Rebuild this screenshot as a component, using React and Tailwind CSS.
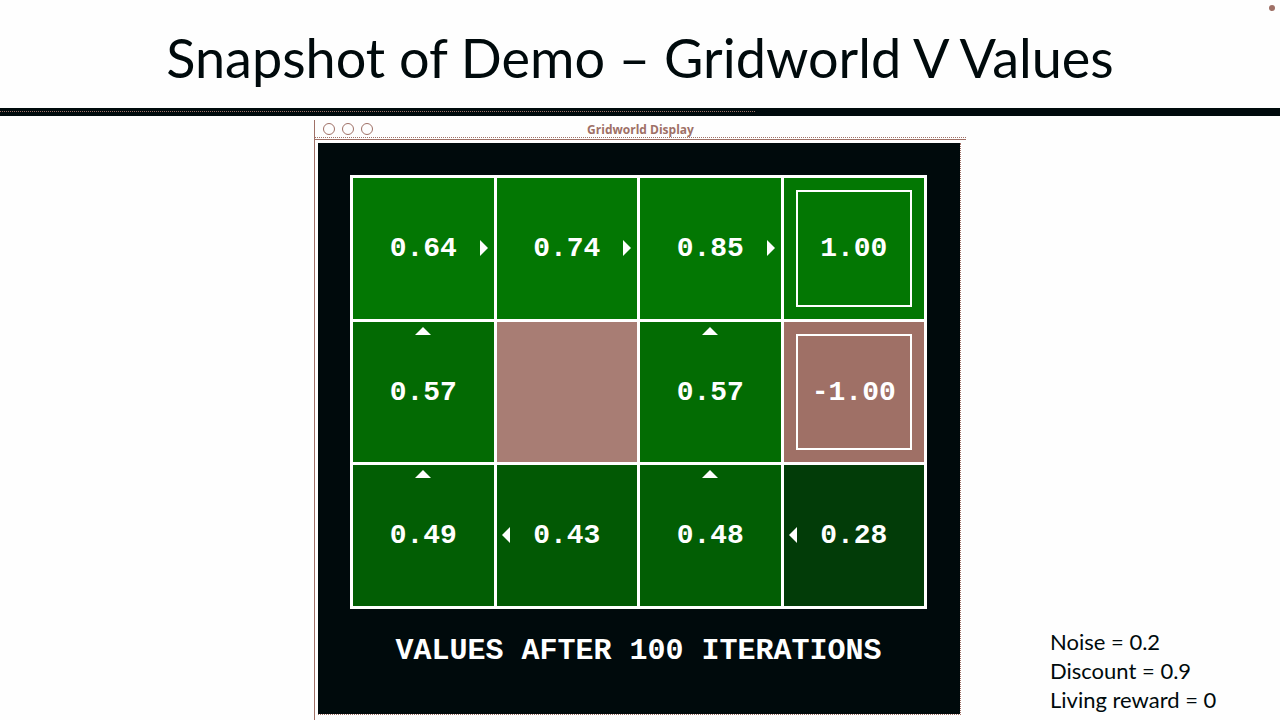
const rows = [
  [
    { value: '0.64', arrow: 'right', tone: 'bg-[#037703]' },
    { value: '0.74', arrow: 'right', tone: 'bg-[#037703]' },
    { value: '0.85', arrow: 'right', tone: 'bg-[#037703]' },
    { value: '1.00', terminal: true, tone: 'bg-[#037703]' },
  ],
  [
    { value: '0.57', arrow: 'up', tone: 'bg-[#036a03]' },
    { value: '', tone: 'bg-[#a87d74]' },
    { value: '0.57', arrow: 'up', tone: 'bg-[#036c03]' },
    { value: '-1.00', terminal: true, tone: 'bg-[#9f7066]' },
  ],
  [
    { value: '0.49', arrow: 'up', tone: 'bg-[#025e04]' },
    { value: '0.43', arrow: 'left', tone: 'bg-[#025904]' },
    { value: '0.48', arrow: 'up', tone: 'bg-[#025e04]' },
    { value: '0.28', arrow: 'left', tone: 'bg-[#023c08]' },
  ],
];

function Arrow({ direction }) {
  if (direction === 'up') {
    return (
      <svg className="absolute top-[5px] left-1/2 h-2 w-4 -translate-x-1/2" viewBox="0 0 16 8" aria-hidden="true">
        <path d="M8 0 16 8H0Z" fill="#fff" />
      </svg>
    );
  }
  if (direction === 'left') {
    return (
      <svg className="absolute top-1/2 left-[5px] h-4 w-2 -translate-y-1/2" viewBox="0 0 8 16" aria-hidden="true">
        <path d="M0 8 8 0V16Z" fill="#fff" />
      </svg>
    );
  }
  return (
    <svg className="absolute top-1/2 right-[6px] h-4 w-2 -translate-y-1/2" viewBox="0 0 8 16" aria-hidden="true">
      <path d="M8 8 0 0V16Z" fill="#fff" />
    </svg>
  );
}

function Cell({ value, arrow, terminal, tone }) {
  return (
    <div className={`relative flex aspect-square p-3 ${tone}`}>
      <div
        className={`flex flex-1 items-center justify-center border-2 pt-0.5 ${terminal ? 'border-white' : 'border-transparent'}`}
      >
        <span>{value}</span>
      </div>
      {arrow && <Arrow direction={arrow} />}
    </div>
  );
}

function TitleBar() {
  return (
    <div className="relative flex h-5 items-center justify-center border-b border-[#9f7066]">
      <svg className="absolute top-[3px] left-2 h-3 w-[51px]" viewBox="0 0 51 12" fill="none" stroke="#9f7066" aria-hidden="true">
        <circle cx="6" cy="6" r="5.5" />
        <circle cx="25" cy="6" r="5.5" />
        <circle cx="44" cy="6" r="5.5" />
      </svg>
      <h2 className="font-['Open_Sans',sans-serif] text-xs leading-4 font-bold text-[#9f7066]">Gridworld Display</h2>
      <div className="absolute inset-x-0 bottom-px border-b border-dotted border-[#9f7066]" />
    </div>
  );
}

export default function App() {
  return (
    <main className="relative flex min-h-screen flex-col bg-[#fefefe] font-['Lato',sans-serif] text-[#000a0c]">
      <div className="absolute top-[5px] right-[5px] h-1.5 w-1.5 rounded-full bg-[#9f7066]" />
      <h1 className="px-6 pt-[26px] pb-[18px] text-center text-[54px] leading-[64px]">Snapshot of Demo – Gridworld V Values</h1>
      <div className="h-2 bg-[#000a0c] pt-[3px]">
        <div className="w-[59%] border-t border-dotted border-[#9f7066]" />
      </div>
      <div className="grid flex-1 grid-cols-[1fr_minmax(0,652px)_1fr]">
        <section className="col-start-2 mt-1 border-l border-[#9f7066]">
          <TitleBar />
          <div className="mt-[3px] mr-[5px] ml-[3px] border-r border-b border-dotted border-[#9f7066] bg-[#000a0c] bg-clip-padding pt-8 pr-[33px] pb-[45px] pl-8 font-['Liberation_Mono',monospace] font-bold text-white">
            <div className="flex flex-col gap-[3px] bg-white p-[3px] text-[28px] leading-8">
              {rows.map((row, index) => (
                <div key={index} className="grid grid-cols-4 gap-[3px]">
                  {row.map((cell, column) => (
                    <Cell key={column} {...cell} />
                  ))}
                </div>
              ))}
            </div>
            <p className="mt-6 text-center text-[30px] leading-9 whitespace-nowrap">VALUES AFTER 100 ITERATIONS</p>
          </div>
        </section>
        <aside className="self-end pb-[6px] pl-[84px] text-[22px] leading-[29px]">
          <p>Noise = 0.2</p>
          <p>Discount = 0.9</p>
          <p>Living reward = 0</p>
        </aside>
      </div>
    </main>
  );
}
